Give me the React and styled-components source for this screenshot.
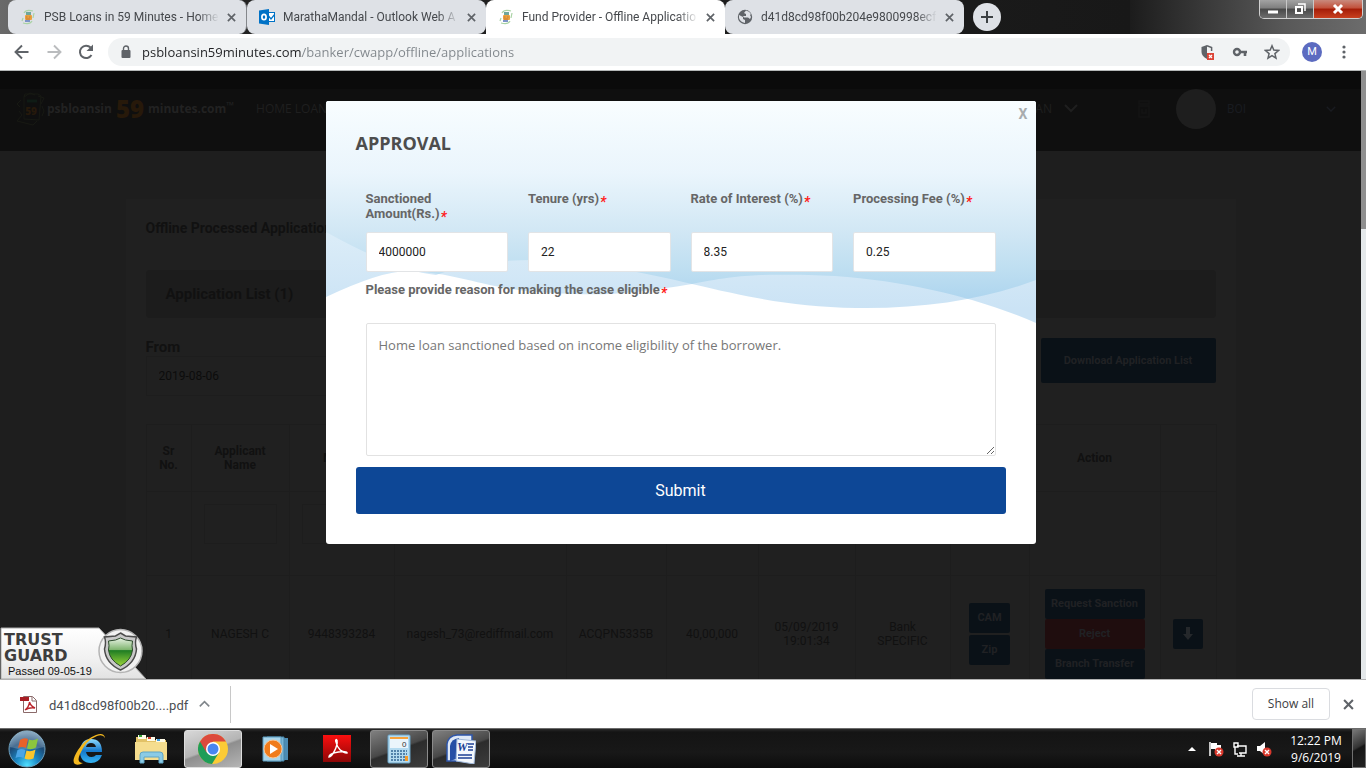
import React from 'react';
import styled, { createGlobalStyle, css } from 'styled-components';

const ui = '"Open Sans", "Noto Sans", sans-serif';
const body = 'Roboto, "Liberation Sans", sans-serif';

const GlobalStyle = createGlobalStyle`
  * { box-sizing: border-box; }
  body { margin: 0; font-family: ${body}; overflow: hidden; }
  button, input, textarea { font: inherit; margin: 0; padding: 0; border: 0; }
  button { background: none; }
  svg { display: block; flex: none; }
`;

const Screen = styled.div`
  display: flex;
  flex-direction: column;
  height: 100vh;
`;

/* ---------- browser chrome ---------- */

const TabStrip = styled.div`
  display: flex;
  flex: none;
  height: 34px;
  padding-left: 8px;
  background: linear-gradient(90deg, #6a6a6a 0, #232323 240px, #181818 1130px, #1c1c1c 82%, #585858 94%, #6c6c6c 100%);
`;

const Tab = styled.div`
  display: flex;
  align-items: center;
  flex: 0 1 239px;
  gap: 8px;
  padding: 0 7px 0 12px;
  min-width: 0;
  border-radius: 8px;
  background: ${(p) => (p.$active ? '#ffffff' : '#dee1e6')};
  ${(p) => p.$active && css`border-radius: 8px 8px 0 0;`}
  ${(p) => p.$divided && css`border-right: 1px solid #84878b;`}
`;

const TabTitle = styled.span`
  flex: 1;
  min-width: 0;
  margin-right: -4px;
  overflow: hidden;
  white-space: nowrap;
  font: 12px/18px ${body};
  color: #45484c;
  mask-image: linear-gradient(90deg, #000 88%, transparent 100%);
`;

const IconButton = styled.button`
  display: grid;
  place-items: center;
  flex: none;
  width: ${(p) => p.$size || 16}px;
  height: ${(p) => p.$size || 16}px;
  border-radius: 50%;
  color: ${(p) => p.$color || '#5f6368'};
  background: ${(p) => p.$bg || 'transparent'};
`;

const NewTab = styled(IconButton)`
  margin: 3px 0 0 9px;
`;

const WindowControls = styled.div`
  display: flex;
  margin: 0 3px 0 auto;
  height: 19px;
  border: 1px solid #d0d0d0;
  border-top: 0;
  border-radius: 0 0 5px 5px;
  overflow: hidden;
`;

const WindowButton = styled.button`
  display: grid;
  place-items: center;
  width: ${(p) => (p.$close ? 48 : 27)}px;
  border-right: ${(p) => (p.$close ? '0' : '1px solid #c8c8c8')};
  background: ${(p) =>
    p.$close
      ? 'linear-gradient(#c98a7d 0, #c2503a 45%, #a41d08 50%, #c8401f 100%)'
      : 'linear-gradient(#a3a3a3 0, #7e7e7e 45%, #484848 50%, #6d6d6d 100%)'};
`;

const Toolbar = styled.div`
  display: flex;
  align-items: center;
  flex: none;
  height: 37px;
  padding: 0 14px 0 12px;
  background: #ffffff;
  border-bottom: 1px solid #b5b8b8;
`;

const NavButtons = styled.div`
  display: flex;
  gap: 12px;
  margin-right: 12px;
`;

const AddressBar = styled.div`
  display: flex;
  align-items: center;
  flex: 1;
  height: 28px;
  padding: 0 10px 0 13px;
  gap: 11px;
  border-radius: 14px;
  background: #f1f3f4;
`;

const UrlInput = styled.input`
  flex: 1;
  min-width: 0;
  height: 24px;
  font: 13px/24px ${ui};
  color: transparent;
  background: linear-gradient(90deg, #202124 160px, #80868b 160px);
  background-clip: text;
  outline: 0;
`;

const AddressActions = styled.div`
  display: flex;
  gap: 16px;
`;

const Avatar = styled.button`
  width: 20px;
  height: 20px;
  margin: 0 14px 0 12px;
  border-radius: 50%;
  background: #5c6bc0;
  color: #ffffff;
  font: 11px/20px ${body};
`;

/* ---------- page ---------- */

const Viewport = styled.div`
  position: relative;
  display: flex;
  flex: 1;
  min-height: 0;
  overflow: hidden;
  background: #1e1e1e;
`;

const Page = styled.div`
  flex: 1;
  min-width: 0;
`;

const ScrollTrack = styled.div`
  flex: none;
  width: 5px;
  background: #e4e8ea;
`;

const ScrollThumb = styled.div`
  height: 26%;
  background: #8f8f8f;
`;

const SiteHeader = styled.header`
  display: flex;
  align-items: center;
  height: 80px;
  padding: 0 25px 4px 16px;
  background: linear-gradient(#0b0b0b 18px, #0f0f0f 18px);
  color: #1e1e1e;
`;

const Brand = styled.a`
  display: flex;
  align-items: center;
  color: #222222;
  text-decoration: none;
  font: bold 12px/24px ${ui};
`;

const BrandNumber = styled.span`
  margin: 0 4px;
  font-size: 24px;
  font-weight: 800;
  color: #27190a;
`;

const Trade = styled.span`
  padding-bottom: 8px;
  font-size: 10px;
  line-height: 10px;
`;

const NavLink = styled.a`
  display: flex;
  align-items: center;
  gap: 12px;
  margin-left: ${(p) => (p.$end ? 'auto' : '22px')};
  color: #1f1f1f;
  text-decoration: none;
  font: 12px/16px ${ui};
`;

const Account = styled.div`
  display: flex;
  align-items: center;
  gap: 11px;
  margin-left: 26px;
  width: 160px;
  color: #191b20;
  font: 12px/16px ${body};

  > :last-child { margin-left: auto; }
`;

const AccountPicture = styled.span`
  width: 40px;
  height: 40px;
  border-radius: 50%;
  background: #1e1e1e;
`;

const TrashSlot = styled.span`
  margin-left: 60px;
`;

const Card = styled.main`
  max-width: 1110px;
  margin: 48px auto 0;
  padding: 20px;
  background: #202020;
  color: #111111;
`;

const PageTitle = styled.h1`
  margin: 0 0 32px;
  font: bold 14px/19px ${body};
`;

const ListHeading = styled.h2`
  margin: 0 0 20px;
  padding: 0 20px;
  border-radius: 4px;
  background: #1c1c1c;
  font: bold 15px/48px ${body};
`;

const FilterBar = styled.div`
  display: flex;
  justify-content: space-between;
  height: 86px;
`;

const DateField = styled.label`
  display: block;
  width: 300px;
  font: bold 15px/18px ${body};
`;

const DateInput = styled.input`
  display: block;
  width: 100%;
  height: 40px;
  padding: 0 12px;
  border: 1px solid #1d1d1d;
  background: transparent;
  color: #0c0c0c;
  font: 12px/16px ${body};
`;

const ActionButton = styled.button`
  display: block;
  width: ${(p) => p.$width}px;
  height: ${(p) => p.$height || 30}px;
  margin: 0 auto ${(p) => p.$gap || 0}px;
  border-radius: 2px;
  background: ${(p) => (p.$danger ? '#1f0d0e' : '#0a1117')};
  color: #202124;
  font: bold 11px/15px ${body};
`;

const DataTable = styled.table`
  width: 100%;
  table-layout: fixed;
  border-collapse: collapse;
  border: 1px solid #1c1c1c;
  text-align: center;
  font: 12px/14px ${body};
`;

const Row = styled.tr`
  height: ${(p) => p.$height}px;
`;

const HeadCell = styled.th`
  padding: 0 6px;
  border: 1px solid #1d1d1d;
`;

const Cell = styled.td`
  padding: ${(p) => (p.$wide ? '0' : '0 12px')};
  border: 1px solid #1d1d1d;
  vertical-align: ${(p) => (p.$top ? 'top' : 'middle')};
`;

const ColumnFilter = styled.input`
  width: 100%;
  height: 40px;
  margin-top: 12px;
  border: 1px solid #1d1d1d;
  background: transparent;
`;

const TrustSeal = styled.a`
  position: absolute;
  left: 0;
  bottom: 0;
`;

/* ---------- dialog ---------- */

const Overlay = styled.div`
  position: absolute;
  inset: 0 5px 0 0;
  display: flex;
  justify-content: center;
  align-items: flex-start;
  padding-top: 30px;
`;

const Dialog = styled.form`
  position: relative;
  flex: 0 1 710px;
  padding: 30px;
  border-radius: 3px;
  background: #ffffff;
  overflow: hidden;
`;

const Waves = styled.svg`
  position: absolute;
  inset: 0 0 auto;
  width: 100%;
  height: 224px;
`;

const DialogBody = styled.div`
  position: relative;
`;

const CloseButton = styled.button`
  position: absolute;
  top: 5px;
  right: 8px;
  color: #a9acae;
  font: bold 14px/16px ${body};
`;

const DialogTitle = styled.h2`
  margin: 0 0 35px;
  font: bold 18px/25px ${ui};
  color: #4d4d4d;
`;

const FieldGrid = styled.div`
  display: grid;
  grid-template-columns: repeat(4, 1fr);
  column-gap: 20px;
  padding: 0 10px;
`;

const Field = styled.label`
  display: flex;
  flex-direction: column;
  justify-content: space-between;
  height: 81px;
  color: #666666;
  font: bold 13px/15px ${body};
`;

const Required = styled.span`
  margin-left: 1px;
  color: #ff1a1a;
  font: italic bold 14px/8px ${body};
  vertical-align: -4px;
`;

const TextInput = styled.input`
  width: 100%;
  height: 40px;
  padding: 0 12px;
  border: 1px solid #e2e4e6;
  border-radius: 2px;
  background: #ffffff;
  color: #222222;
  font: 12px/16px ${body};
`;

const ReasonField = styled.label`
  display: block;
  padding: 10px 10px 0;
  color: #666666;
  font: bold 13px/15px ${body};
`;

const ReasonText = styled.textarea`
  display: block;
  width: 100%;
  height: 133px;
  margin: 26px 0 11px;
  padding: 11px 12px;
  border: 1px solid #e2e2e2;
  border-radius: 2px;
  color: #777777;
  font: 13px/20px ${ui};
  resize: both;
`;

const SubmitButton = styled.button`
  display: block;
  width: 100%;
  height: 47px;
  border-radius: 3px;
  background: #0d4796;
  color: #ffffff;
  font: 16px/20px ${body};
`;

/* ---------- download shelf and taskbar ---------- */

const Shelf = styled.div`
  display: flex;
  align-items: center;
  flex: none;
  height: 49px;
  padding: 0 10px 0 20px;
  border-top: 1px solid #b3b3b3;
  background: #ffffff;
`;

const DownloadItem = styled.div`
  display: flex;
  align-items: center;
  height: 37px;
  width: 211px;
  gap: 12px;
  border-right: 1px solid #c8c8c8;
  color: #4a4d52;
  font: 13px/18px ${body};
`;

const FileName = styled.span`
  width: 140px;
  margin-right: -2px;
  padding-top: 4px;
`;

const ShowAll = styled.button`
  width: 78px;
  height: 32px;
  margin: 0 10px 0 auto;
  border: 1px solid #dadce0;
  border-radius: 4px;
  color: #3c4043;
  font: 12px/16px ${ui};
`;

const Taskbar = styled.div`
  display: flex;
  align-items: center;
  flex: none;
  height: 40px;
  padding-left: 8px;
  gap: 4px;
  border-top: 1px solid #6b6b6b;
  background: linear-gradient(#2a2a2a 0, #141414 3px, #181818 60%, #0c0c0c 100%);
`;

const StartButton = styled.button`
  width: 48px;
  height: 38px;
`;

const TaskButton = styled.button`
  display: grid;
  place-items: center;
  width: 58px;
  height: 38px;
  border-radius: 3px;
  ${(p) => p.$open && css`
    border: 1px solid #8b8b8b;
    background: linear-gradient(160deg, #808080 0, #484848 48%, #2c2c2c 52%, #3c3c3c 100%);
  `}
  ${(p) => p.$current && css`
    border: 1px solid #dddddd;
    background: linear-gradient(160deg, #d8d8d8 0, #b4b4b4 48%, #8e8e8e 52%, #b5b5b5 100%);
  `}
`;

const Tray = styled.div`
  display: flex;
  align-items: center;
  gap: 8px;
  margin-left: auto;
  height: 100%;
`;

const Clock = styled.time`
  width: 68px;
  margin: 0 -6px 0 2px;
  color: #ffffff;
  text-align: center;
  font: 12px/17px ${ui};
`;

const ShowDesktop = styled.button`
  width: 14px;
  height: 100%;
  border: 1px solid #707070;
  background: linear-gradient(150deg, #777777 0, #333333 45%, #161616 50%, #222222 100%);
`;

/* ---------- icons ---------- */

const CloseX = ({ size = 9 }) => (
  <svg width={size} height={size} viewBox="0 0 10 10" stroke="currentColor" strokeWidth="1.9"><path d="M1 1l8 8M9 1L1 9" /></svg>
);

const Chevron = ({ width = 14, up, stroke = 'currentColor' }) => (
  <svg width={width} height={width * 0.65} viewBox="0 0 14 9" fill="none" stroke={stroke} strokeWidth="2"><path d={up ? 'M1 8l6-6 6 6' : 'M1 1l6 6 6-6'} /></svg>
);

const PsbIcon = () => (
  <svg width="16" height="16" viewBox="0 0 16 16">
    <path d="M4 4Q6 0 13 2M14 4l-1 5M12 12Q10 16 3 14M2 12l1-3" fill="none" stroke="#a9d3a4" strokeWidth="1.2" />
    <rect x="6" y="3" width="5" height="3" fill="#6fa79b" />
    <rect x="5" y="6" width="7" height="5" rx="1" fill="#e9a13c" />
    <path d="M5 12h5" stroke="#7d93c8" strokeWidth="2" />
    <path d="M6 8h1.500M9 8h1.500M6 10h4" stroke="#c87a34" />
  </svg>
);

const OutlookIcon = () => (
  <svg width="16" height="16" viewBox="0 0 16 16">
    <path d="M9 3h7v10H9z" fill="#0072c6" /><path d="M10 4h5v8h-5z" fill="#fff" />
    <path d="M9.500 7l2.500 3 4-5" fill="none" stroke="#0072c6" strokeWidth="1.300" />
    <path d="M0 1.500L10 0v16L0 14.500z" fill="#0072c6" />
    <ellipse cx="5" cy="8" rx="2.100" ry="2.700" fill="none" stroke="#fff" strokeWidth="1.700" />
  </svg>
);

const GlobeIcon = () => (
  <svg width="16" height="16" viewBox="0 0 16 16">
    <circle cx="8" cy="8" r="7.200" fill="#5f6368" />
    <path d="M2 6q2 1 4 2v2l2 1v3q-5-1-6-5zM9 1.500l-2 2.500 2 1v2H6l1 1.500h4l2 1.500 1-2-1-2 1-1q-1.500-3-5-3.500z" fill="#dee1e6" />
  </svg>
);

const BackIcon = ({ flip, color = '#5f6368' }) => (
  <svg width="20" height="20" viewBox="0 0 20 20" fill="none" stroke={color} strokeWidth="1.900">
    <path d={flip ? 'M3.500 10h13M10 3.500l6.500 6.500-6.500 6.500' : 'M16.500 10h-13M10 3.500L3.500 10l6.500 6.500'} />
  </svg>
);

const ReloadIcon = () => (
  <svg width="20" height="20" viewBox="0 0 20 20">
    <path d="M15.500 13A6.200 6.200 0 1 1 14.600 5.500" fill="none" stroke="#5f6368" strokeWidth="2" />
    <path d="M17 2.500v6.500h-6.500z" fill="#5f6368" />
  </svg>
);

const LockIcon = () => (
  <svg width="10" height="14" viewBox="0 0 10 14">
    <path d="M2.500 6V3.500a2.500 2.500 0 0 1 5 0V6" fill="none" stroke="#5f6368" strokeWidth="1.400" />
    <rect x="0.500" y="5" width="9" height="8" rx="1" fill="#5f6368" />
  </svg>
);

const ShieldIcon = () => (
  <svg width="16" height="16" viewBox="0 0 16 16">
    <path d="M7 1L1.500 3v5q0 4 5.500 7z" fill="#5f6368" />
    <path d="M7 1.700l4.600 1.800V7" fill="none" stroke="#5f6368" strokeWidth="1.500" />
    <rect x="7" y="9" width="7" height="7" fill="#dc4437" />
    <path d="M9 11l3 3M12 11l-3 3" stroke="#fff" strokeWidth="1.200" />
  </svg>
);

const KeyIcon = () => (
  <svg width="16" height="16" viewBox="0 0 16 16">
    <circle cx="5" cy="8" r="3" fill="none" stroke="#5f6368" strokeWidth="2.400" />
    <path d="M8 8h7M13 8v4" stroke="#5f6368" strokeWidth="2.600" />
  </svg>
);

const StarIcon = () => (
  <svg width="16" height="16" viewBox="0 0 16 16">
    <path d="M8 1.800l1.800 4.300 4.700.4-3.600 3.100 1.100 4.600L8 11.700l-4 2.500 1.100-4.600L1.500 6.500l4.700-.4z" fill="none" stroke="#5f6368" strokeWidth="1.500" />
  </svg>
);

const DotsIcon = () => (
  <svg width="4" height="14" viewBox="0 0 4 14" fill="#5f6368"><circle cx="2" cy="2" r="1.600" /><circle cx="2" cy="7" r="1.600" /><circle cx="2" cy="12" r="1.600" /></svg>
);

const BrandCards = () => (
  <svg width="31" height="36" viewBox="0 0 31 36" fill="none" stroke="#171913">
    <path d="M9 3h13l3 2-2 24-15-1V6zM8 6l6-4 5 2M22 5l6 2-3 6M26 15l2 5-2 5M5 9l-4 4 3 3M3 20l3 4-5 6 16 4 4-4" />
    <path d="M11 10h10" stroke="#0f1b15" strokeWidth="3" />
    <text x="15" y="24" textAnchor="middle" fill="#26190b" stroke="none" fontFamily="Open Sans" fontWeight="800" fontSize="10">59</text>
  </svg>
);

const TrashIcon = () => (
  <svg width="12" height="18" viewBox="0 0 12 18" fill="none" stroke="#151515" strokeWidth="1.500"><path d="M1 1h10v3H1zM1 6h10v11H1zM4 9v4h4V9" /></svg>
);

const DownIcon = () => (
  <svg width="10" height="14" viewBox="0 0 10 14" fill="#25282b"><path d="M3 0h4v7h3l-5 6-5-6h3z" /></svg>
);

const DialogWaves = () => {
  const crest = 'M0 0V196Q55 170 82 170C130 172 150 184 200 190C270 196 300 194 366 183C420 172 440 174 483 174C570 176 650 196 710 222V0z';
  const trough = 'M0 0V131Q70 170 110 174Q150 159 208 159C260 160 320 172 366 183C430 198 470 206 530 207C600 208 660 198 710 179V0z';
  return (
    <Waves viewBox="0 0 710 224" preserveAspectRatio="none" aria-hidden="true">
      <defs>
        <linearGradient id="sky" gradientUnits="userSpaceOnUse" x1="0" y1="0" x2="0" y2="208">
          <stop offset="0" stopColor="#f8fdff" />
          <stop offset="0.350" stopColor="#eaf5fc" />
          <stop offset="0.650" stopColor="#cfe6f4" />
          <stop offset="0.800" stopColor="#bfdff1" />
          <stop offset="1" stopColor="#a9d2ee" />
        </linearGradient>
        <linearGradient id="foam" gradientUnits="userSpaceOnUse" x1="0" y1="130" x2="0" y2="208">
          <stop offset="0" stopColor="#dcedf8" />
          <stop offset="1" stopColor="#cbe3f5" />
        </linearGradient>
        <clipPath id="under"><path d={trough} /></clipPath>
      </defs>
      <path d={crest} fill="url(#foam)" />
      <path d={trough} fill="url(#foam)" />
      <path d={crest} fill="url(#sky)" clipPath="url(#under)" />
    </Waves>
  );
};

const SealArt = () => (
  <svg width="146" height="52" viewBox="0 0 146 52">
    <defs>
      <linearGradient id="sealBg" x2="0" y2="1"><stop stopColor="#fff" /><stop offset="0.600" stopColor="#f1f1f1" /><stop offset="1" stopColor="#e2e2e2" /></linearGradient>
      <linearGradient id="sealGreen" x2="0" y2="1"><stop stopColor="#e8f2e4" /><stop offset="0.420" stopColor="#7fb56f" /><stop offset="0.450" stopColor="#1f7d23" /><stop offset="1" stopColor="#9ad43a" /></linearGradient>
    </defs>
    <path d="M1 1h98l47 51H1z" fill="url(#sealBg)" stroke="#a9a9a9" />
    <circle cx="120.500" cy="24" r="21.500" fill="#f2f2f2" stroke="#b4b4b4" strokeWidth="1.500" />
    <path d="M120.500 6l5 3 11 1q-2 5 0 12-1 14-16 21-15-7-16-21 2-7 0-12l11-1z" fill="#c9c9c9" stroke="#4c4c4c" strokeWidth="1.500" />
    <path d="M120.500 11l5 2 7 1q-1 5 0 9-1 10-12 16-11-6-12-16 1-4 0-9l7-1z" fill="url(#sealGreen)" stroke="#2b4a2b" />
    <g fill="#3d3d3d" fontFamily="DejaVu Sans" fontWeight="bold" fontSize="16">
      <text x="4" y="18">TRUST</text>
      <text x="4" y="34">GUARD</text>
    </g>
    <text x="8" y="48" fontFamily="Liberation Sans" fontSize="11" fill="#111">Passed 09-05-19</text>
  </svg>
);

const PdfIcon = () => (
  <svg width="17" height="17" viewBox="0 0 17 17">
    <path d="M3.500.5h9l4 4v12h-13z" fill="#fff" stroke="#8b6a6a" />
    <path d="M12 1v4h4" fill="none" stroke="#8b6a6a" />
    <path d="M0 1h9v4H0z" fill="#a81e24" />
    <path d="M5 14q4-3 4.500-8 1 4 5.500 6-5-1-10 2z" fill="none" stroke="#b8232a" strokeWidth="1.400" />
  </svg>
);

const StartOrb = () => (
  <svg width="38" height="38" viewBox="0 0 38 38">
    <defs>
      <radialGradient id="orb" cx="0.500" cy="0.950" r="0.900"><stop stopColor="#4fe0ff" /><stop offset="0.350" stopColor="#1c88c4" /><stop offset="0.700" stopColor="#1c4a76" /><stop offset="1" stopColor="#6a90ae" /></radialGradient>
    </defs>
    <circle cx="19" cy="19" r="18" fill="url(#orb)" stroke="#6ea0bd" />
    <path d="M2 17a17 17 0 0 1 34 0q-17 5-34 0z" fill="#fff" opacity="0.200" />
    <path d="M12 10q4-3 8-1l-2 9q-4-2-8 0z" fill="#e8622a" />
    <path d="M21 9.500q4 2 9-1l-2 9q-5 3-9 1z" fill="#8cc63e" />
    <path d="M9.500 20q4-2 8 0l-2 8q-4-2-8 0z" fill="#4aa5e6" />
    <path d="M18.500 20.500q4 2 9-1l-2 9q-5 2-9 0z" fill="#fbc62d" />
  </svg>
);

const IeIcon = () => (
  <svg width="34" height="34" viewBox="0 0 34 34">
    <defs><linearGradient id="ie" x2="0" y2="1"><stop stopColor="#8fdcff" /><stop offset="0.500" stopColor="#1478cc" /><stop offset="1" stopColor="#35b4f2" /></linearGradient></defs>
    <path d="M30 20H14q1 5 5.500 5 3 0 4.500-2h6q-3 8-11 8-11 0-11-12 1-12 11-12 11 0 11 13zM14 15h10q-1-4-5-4t-5 4z" fill="url(#ie)" />
    <path d="M33 6Q32 0 24 3 13 7 6 18-1 29 3 32q3 2 8-1Q4 31 8 22 14 8 25 4q6-2 8 2z" fill="#f4b81f" />
  </svg>
);

const FolderIcon = () => (
  <svg width="34" height="32" viewBox="0 0 34 32">
    <path d="M2 4h10l2 3h18v20H2z" fill="#e2c266" />
    <path d="M4 2h8v4H4zM13 4h8v4h-8zM22 6h9v4h-9z" fill="#fffbe8" />
    <path d="M5 3h3" stroke="#35a235" strokeWidth="2" /><path d="M14 5h3" stroke="#d23b2a" strokeWidth="2" /><path d="M23 7h3" stroke="#3d9de0" strokeWidth="2" />
    <path d="M1 9h32v18H1z" fill="#f5dd8e" />
    <path d="M6 30V22q0-3 3-3h17q3 0 3 3v8h-4v-6H10v6z" fill="#8bcbe6" stroke="#5fa5c6" />
  </svg>
);

const ChromeIcon = () => (
  <svg width="30" height="30" viewBox="0 0 30 30">
    <circle cx="15" cy="15" r="15" fill="#fbcb36" />
    <path d="M2 7.500A15 15 0 0 0 14 30l7-11.500L15 15z" fill="#1f9d58" />
    <path d="M2 7.500A15 15 0 0 1 28 7.500H15L8.500 18.500z" fill="#dc4a3d" />
    <circle cx="15" cy="15" r="7" fill="#fff" /><circle cx="15" cy="15" r="5.500" fill="#4886f0" />
  </svg>
);

const MediaIcon = () => (
  <svg width="27" height="26" viewBox="0 0 27 26">
    <path d="M8 2h18v22H8z" fill="#4c8cb4" /><path d="M5 1h17v24H5z" fill="#79b5d6" stroke="#4784a8" /><path d="M1 1h18v24H1z" fill="#a9d5ea" stroke="#5a9abc" />
    <circle cx="11" cy="13" r="9" fill="#f07c1c" stroke="#fbc695" /><path d="M8 8l8 5-8 5z" fill="#fff" />
  </svg>
);

const AdobeIcon = () => (
  <svg width="28" height="27" viewBox="0 0 28 27">
    <defs><linearGradient id="adobe" x2="0" y2="1"><stop stopColor="#fa0f0f" /><stop offset="1" stopColor="#8c0606" /></linearGradient></defs>
    <path d="M0 0h28v27H0z" fill="url(#adobe)" />
    <path d="M6 22c3 0 9-11 8-16 0-2-2-2-1 1 1 6 6 11 11 11 1-3-18-1-18 4z" fill="none" stroke="#fff" strokeWidth="1.500" />
  </svg>
);

const CalcIcon = () => (
  <svg width="24" height="30" viewBox="0 0 24 30">
    <rect x="1" y="1" width="22" height="28" rx="1" fill="#b4dbf0" stroke="#6aa3c6" />
    <path d="M3 3h18v2H3z" fill="#f6a23c" /><path d="M3 5h18v9H3z" fill="#eaf5fb" />
    <text x="15" y="13" fontFamily="Liberation Sans" fontSize="8" fill="#333">0</text>
    <path d="M4 17h16M4 20h16M4 23h16M4 26h16" stroke="#5283ab" strokeWidth="2" strokeDasharray="2 1" />
    <path d="M18 22h3v5h-3z" fill="#f49a2a" />
  </svg>
);

const WordIcon = () => (
  <svg width="30" height="30" viewBox="0 0 30 30">
    <path d="M1 27V10Q2 2 11 1h15v26z" fill="#dfe9f7" stroke="#2e56ab" strokeWidth="1.500" />
    <path d="M4 27V12q1-7 9-8v20z" fill="#274fa5" />
    <path d="M11 5l19 2-2 23-18-3z" fill="#f4f8fd" stroke="#9fb8da" />
    <text x="11" y="17" fontFamily="Liberation Serif" fontStyle="italic" fontWeight="bold" fontSize="12" fill="#1c3f94">W</text>
    <path d="M22 10h6M22 13h5M22 16h5M12 21h14M12 24h14" stroke="#1c3f94" strokeWidth="1.500" />
  </svg>
);

const Badge = () => (
  <g><circle cx="11" cy="11" r="4.500" fill="#d8382c" /><path d="M9 9l4 4M13 9l-4 4" stroke="#fff" strokeWidth="1.400" /></g>
);

const TrayIcon = ({ kind }) => (
  <svg width="16" height="16" viewBox="0 0 16 16">
    {kind === 'arrow' && <path d="M4 10h8L8 6z" fill="#fff" />}
    {kind === 'flag' && <><path d="M2 1v14" stroke="#fff" strokeWidth="1.500" /><path d="M3 2h6v2h4v6H7V8H3z" fill="#fff" /><Badge /></>}
    {kind === 'net' && <><path d="M5 5h9v7H7M5 15h8M9 12v3M3 6v7h3M2 2h4v4H2z" fill="none" stroke="#fff" strokeWidth="1.400" /></>}
    {kind === 'sound' && <><path d="M1 5h3l5-4v13l-5-4H1z" fill="#fff" /><Badge /></>}
  </svg>
);

const WinGlyph = ({ kind }) => (
  <svg width="14" height="12" viewBox="0 0 14 12" fill="none" stroke="#fff">
    {kind === 'min' && <path d="M2 9h10" strokeWidth="3" />}
    {kind === 'max' && <><path d="M5 1h7v7" strokeWidth="1.500" /><path d="M3 4h6v6H3z" strokeWidth="2" /></>}
    {kind === 'close' && <path d="M3 2l8 8M11 2l-8 8" strokeWidth="3" />}
  </svg>
);

/* ---------- data ---------- */

const tabs = [
  { title: 'PSB Loans in 59 Minutes - Home', icon: <PsbIcon />, divided: true },
  { title: 'MarathaMandal - Outlook Web A', icon: <OutlookIcon /> },
  { title: 'Fund Provider - Offline Applicatio', icon: <PsbIcon />, active: true },
  { title: 'd41d8cd98f00b204e9800998ecf8', icon: <GlobeIcon /> },
];

const fields = [
  { label: 'Sanctioned Amount(Rs.)', value: '4000000' },
  { label: 'Tenure (yrs)', value: '22' },
  { label: 'Rate of Interest (%)', value: '8.35' },
  { label: 'Processing Fee (%)', value: '0.25' },
];

const columns = [
  { width: 45, title: 'Sr No.' },
  { width: 98, title: 'Applicant Name', filter: true },
  { width: 105, title: 'Mobile', filter: true },
  { width: 172 },
  { width: 100 },
  { width: 92 },
  { width: 97 },
  { width: 95 },
  { width: 79 },
  { width: 131, title: 'Action' },
  { width: 56 },
];

const record = ['1', 'NAGESH C', '9448393284', 'nagesh_73@rediffmail.com', 'ACQPN5335B', '40,00,000', '05/09/2019 19:01:34', 'Bank SPECIFIC'];

const tasks = [
  { name: 'Internet Explorer', icon: <IeIcon /> },
  { name: 'Windows Explorer', icon: <FolderIcon /> },
  { name: 'Google Chrome', icon: <ChromeIcon />, current: true },
  { name: 'Media Player', icon: <MediaIcon /> },
  { name: 'Adobe Reader', icon: <AdobeIcon /> },
  { name: 'Calculator', icon: <CalcIcon />, open: true },
  { name: 'Word', icon: <WordIcon />, open: true },
];

export default function App() {
  return (
    <Screen>
      <GlobalStyle />
      <TabStrip>
        {tabs.map((t) => (
          <Tab key={t.title} $active={t.active} $divided={t.divided}>
            {t.icon}
            <TabTitle>{t.title}</TabTitle>
            <IconButton aria-label="Close tab"><CloseX /></IconButton>
          </Tab>
        ))}
        <NewTab $size={28} $bg="#dee1e6" $color="#3c4043" aria-label="New tab">
          <svg width="12" height="12" viewBox="0 0 12 12" stroke="currentColor" strokeWidth="2"><path d="M6 0v12M0 6h12" /></svg>
        </NewTab>
        <WindowControls>
          <WindowButton aria-label="Minimize"><WinGlyph kind="min" /></WindowButton>
          <WindowButton aria-label="Restore"><WinGlyph kind="max" /></WindowButton>
          <WindowButton $close aria-label="Close"><WinGlyph kind="close" /></WindowButton>
        </WindowControls>
      </TabStrip>

      <Toolbar>
        <NavButtons>
          <IconButton $size={20} aria-label="Back"><BackIcon /></IconButton>
          <IconButton $size={20} aria-label="Forward"><BackIcon flip color="#babcbe" /></IconButton>
          <IconButton $size={20} aria-label="Reload"><ReloadIcon /></IconButton>
        </NavButtons>
        <AddressBar>
          <LockIcon />
          <UrlInput aria-label="Address" defaultValue="psbloansin59minutes.com/banker/cwapp/offline/applications" />
          <AddressActions>
            <IconButton aria-label="Blocked content"><ShieldIcon /></IconButton>
            <IconButton aria-label="Passwords"><KeyIcon /></IconButton>
            <IconButton aria-label="Bookmark"><StarIcon /></IconButton>
          </AddressActions>
        </AddressBar>
        <Avatar>M</Avatar>
        <IconButton aria-label="Menu"><DotsIcon /></IconButton>
      </Toolbar>

      <Viewport>
        <Page>
          <SiteHeader>
            <Brand href="#home">
              <BrandCards />
              psbloansin<BrandNumber>59</BrandNumber>minutes.com<Trade>™</Trade>
            </Brand>
            <NavLink href="#home-loan">HOME LOAN</NavLink>
            <NavLink href="#loan" $end>LOAN <Chevron /></NavLink>
            <TrashSlot><TrashIcon /></TrashSlot>
            <Account>
              <AccountPicture />
              BOI
              <Chevron width={10} />
            </Account>
          </SiteHeader>
          <Card>
            <PageTitle>Offline Processed Applications</PageTitle>
            <ListHeading>Application List (1)</ListHeading>
            <FilterBar>
              <DateField>From<DateInput defaultValue="2019-08-06" /></DateField>
              <div><ActionButton $width={175} $height={45}>Download Application List</ActionButton></div>
            </FilterBar>
            <DataTable>
              <colgroup>{columns.map((c, i) => <col key={i} width={c.width} />)}</colgroup>
              <thead>
                <Row $height={67}>{columns.map((c, i) => <HeadCell key={i}>{c.title}</HeadCell>)}</Row>
              </thead>
              <tbody>
                <Row $height={84}>
                  {columns.map((c, i) => (
                    <Cell key={i} $top>{c.filter && <ColumnFilter aria-label={`Filter by ${c.title}`} />}</Cell>
                  ))}
                </Row>
                <Row $height={116}>
                  {record.map((v) => <Cell key={v}>{v}</Cell>)}
                  <Cell $wide>
                    <ActionButton $width={41} $gap={2}>CAM</ActionButton>
                    <ActionButton $width={41}>Zip</ActionButton>
                  </Cell>
                  <Cell $wide>
                    <ActionButton $width={100}>Request Sanction</ActionButton>
                    <ActionButton $width={100} $danger>Reject</ActionButton>
                    <ActionButton $width={100}>Branch Transfer</ActionButton>
                  </Cell>
                  <Cell $wide>
                    <ActionButton $width={30} aria-label="Download"><IconCenter><DownIcon /></IconCenter></ActionButton>
                  </Cell>
                </Row>
              </tbody>
            </DataTable>
          </Card>
        </Page>
        <ScrollTrack><ScrollThumb /></ScrollTrack>

        <TrustSeal href="#trust-guard" aria-label="Trust Guard"><SealArt /></TrustSeal>

        <Overlay>
          <Dialog role="dialog" aria-label="Approval" onSubmit={(e) => e.preventDefault()}>
            <DialogWaves />
            <DialogBody>
              <DialogTitle>APPROVAL</DialogTitle>
              <FieldGrid>
                {fields.map((f) => (
                  <Field key={f.label}>
                    <span>{f.label}<Required>*</Required></span>
                    <TextInput defaultValue={f.value} />
                  </Field>
                ))}
              </FieldGrid>
              <ReasonField>
                Please provide reason for making the case eligible<Required>*</Required>
                <ReasonText defaultValue="Home loan sanctioned based on income eligibility of the borrower." />
              </ReasonField>
              <SubmitButton type="submit">Submit</SubmitButton>
            </DialogBody>
            <CloseButton type="button" aria-label="Close dialog">X</CloseButton>
          </Dialog>
        </Overlay>
      </Viewport>

      <Shelf>
        <DownloadItem>
          <PdfIcon />
          <FileName>d41d8cd98f00b20....pdf</FileName>
          <Chevron width={11} up stroke="#80868b" />
        </DownloadItem>
        <ShowAll>Show all</ShowAll>
        <IconButton aria-label="Close downloads"><CloseX size={11} /></IconButton>
      </Shelf>

      <Taskbar>
        <StartButton aria-label="Start"><StartOrb /></StartButton>
        {tasks.map((t) => (
          <TaskButton key={t.name} aria-label={t.name} $open={t.open} $current={t.current}>{t.icon}</TaskButton>
        ))}
        <Tray>
          <TrayIcon kind="arrow" />
          <TrayIcon kind="flag" />
          <TrayIcon kind="net" />
          <TrayIcon kind="sound" />
          <Clock>12:22 PM<br />9/6/2019</Clock>
          <ShowDesktop aria-label="Show desktop" />
        </Tray>
      </Taskbar>
    </Screen>
  );
}

const IconCenter = styled.span`
  display: grid;
  place-items: center;
`;
